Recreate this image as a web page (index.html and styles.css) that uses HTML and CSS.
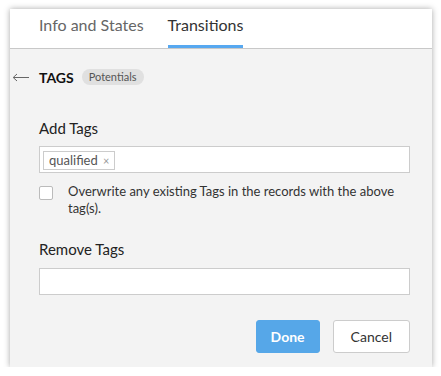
FILE: index.html
```html
<!DOCTYPE html>
<html>
<head>
<meta charset="utf-8">
<link rel="stylesheet" href="styles.css">
</head>
<body>
<div class="panel">
  <div class="tabs">
    <div class="tab">Info and States</div>
    <div class="tab active">Transitions</div>
  </div>
  <div class="content">
    <div class="heading">
      <svg class="back" width="17" height="9" viewBox="0 0 17 9"><path d="M17 4.5H1.5M5 1L1.2 4.5L5 8" fill="none" stroke="#666" stroke-width="1"/></svg>
      <span class="title">TAGS</span>
      <span class="pill">Potentials</span>
    </div>
    <div class="form">
      <div class="label">Add Tags</div>
      <div class="input">
        <span class="chip">qualified <span class="x">×</span></span>
      </div>
      <div class="check-row">
        <span class="checkbox"></span>
        <span class="check-text">Overwrite any existing Tags in the records with the above tag(s).</span>
      </div>
      <div class="label label-remove">Remove Tags</div>
      <div class="input"></div>
      <div class="actions">
        <button class="btn primary">Done</button>
        <button class="btn">Cancel</button>
      </div>
    </div>
  </div>
</div>
</body>
</html>
```
FILE: styles.css
```css
* { box-sizing: border-box; }
body {
  margin: 0;
  background: #fff;
  font-family: Lato, "Open Sans", sans-serif;
  color: #222;
}
.panel {
  margin: 9px 0 0 10px;
  width: 422px;
  height: 358px;
  background: #f3f3f3;
  box-shadow: 0 0 6px rgba(0,0,0,0.35);
  display: flex;
  flex-direction: column;
  overflow: hidden;
}
.tabs {
  height: 40px;
  flex: none;
  background: #fff;
  border-bottom: 1px solid #c8c8c8;
  display: flex;
  padding-left: 29px;
  gap: 24px;
}
.tab {
  font-size: 16px;
  color: #666;
  padding-top: 6px;
  height: 39px;
  border-bottom: 3px solid transparent;
}
.tab.active {
  color: #333;
  border-bottom-color: #57a8f0;
}
.content {
  padding: 20px 22px 0 2px;
}
.heading {
  display: flex;
  align-items: center;
  height: 16px;
}
.back { margin-right: 10px; }
.title {
  font-weight: bold;
  font-size: 14px;
  color: #111;
  margin-right: 8px;
}
.pill {
  background: #e0e0e0;
  border-radius: 8px;
  font-size: 11px;
  color: #555;
  padding: 1px 7px;
  line-height: 14px;
}
.form {
  padding: 34px 0 0 27px;
}
.label {
  font-size: 15px;
  color: #222;
  line-height: 18px;
  margin-bottom: 9px;
}
.input {
  height: 27px;
  background: #fff;
  border: 1px solid #ccc;
  padding: 2px 3px;
}
.chip {
  display: inline-block;
  border: 1px solid #ccc;
  background: #fff;
  font-size: 13px;
  color: #555;
  line-height: 16px;
  padding: 0 5px;
}
.x { font-size: 11px; color: #999; margin-left: 2px; }
.check-row {
  display: flex;
  margin-top: 10px;
}
.checkbox {
  width: 14px;
  height: 14px;
  border: 1px solid #bbb;
  border-radius: 2px;
  background: #fff;
  flex: none;
  margin-right: 15px;
  margin-top: 3px;
}
.check-text {
  font-size: 13px;
  line-height: 17px;
  color: #333;
}
.label-remove { margin-top: 23px; margin-bottom: 10px; }
.actions {
  display: flex;
  justify-content: flex-end;
  gap: 13px;
  margin-top: 25px;
}
.btn {
  height: 33px;
  border: 1px solid #ccc;
  border-radius: 3px;
  background: #fff;
  font-family: inherit;
  font-size: 14px;
  color: #333;
  padding: 0 17px;
}
.btn.primary {
  background: #56a7e8;
  border-color: #56a7e8;
  color: #fff;
  font-weight: bold;
  width: 64px;
  padding: 0;
}
```
